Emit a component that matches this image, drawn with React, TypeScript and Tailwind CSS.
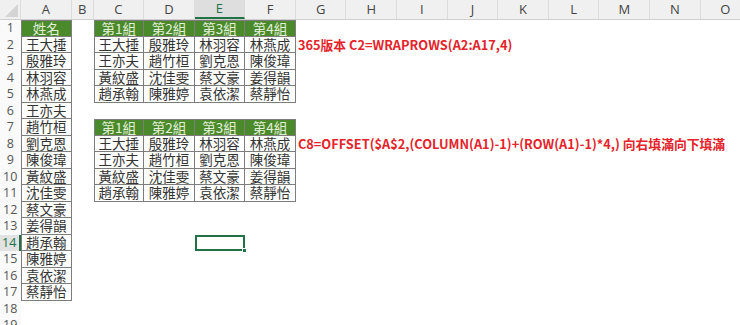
import React from "react";

type Col = { key: string; w: string };

const cols: Col[] = [
  { key: "A", w: "w-[51.5px]" },
  { key: "B", w: "w-[21.5px]" },
  { key: "C", w: "w-[50.6px]" },
  { key: "D", w: "w-[50.6px]" },
  { key: "E", w: "w-[50.6px]" },
  { key: "F", w: "w-[50.6px]" },
  { key: "G", w: "w-[50.6px]" },
  { key: "H", w: "w-[50.6px]" },
  { key: "I", w: "w-[50.6px]" },
  { key: "J", w: "w-[50.6px]" },
  { key: "K", w: "w-[50.6px]" },
  { key: "L", w: "w-[50.6px]" },
  { key: "M", w: "w-[50.6px]" },
  { key: "N", w: "w-[50.6px]" },
  { key: "O", w: "w-[50.6px]" },
];

const names = [
  "王大捶", "殷雅玲", "林羽容", "林燕成", "王亦夫", "趙竹桓", "劉克恩", "陳俊瑋",
  "黃紋盛", "沈佳雯", "蔡文豪", "姜得韻", "趙承翰", "陳雅婷", "袁依潔", "蔡靜怡",
];
const groups = ["第1組", "第2組", "第3組", "第4組"];

type Cell = { text?: string; head?: boolean; table?: boolean; left?: boolean; top?: boolean; red?: boolean; sel?: boolean };

function buildRow(r: number): Cell[] {
  const row: Cell[] = cols.map(() => ({}));
  if (r === 1) row[0] = { text: "姓名", head: true, table: true, left: true, top: true };
  else if (r <= 17) row[0] = { text: names[r - 2], table: true, left: true };
  const blocks = [1, 7];
  for (const start of blocks) {
    if (r >= start && r <= start + 4) {
      for (let c = 0; c < 4; c++) {
        const idx = 2 + c;
        if (r === start) row[idx] = { text: groups[c], head: true, table: true, left: c === 0, top: true };
        else row[idx] = { text: names[(r - start - 1) * 4 + c], table: true, left: c === 0 };
      }
    }
  }
  if (r === 2) row[6] = { text: "365版本 C2=WRAPROWS(A2:A17,4)", red: true };
  if (r === 8) row[6] = { text: "C8=OFFSET($A$2,(COLUMN(A1)-1)+(ROW(A1)-1)*4,) 向右填滿向下填滿", red: true };
  if (r === 14) row[4] = { sel: true };
  return row;
}

const cjk = "font-['Noto_Sans_CJK_TC','Noto_Sans',sans-serif]";

function CellView({ cell, w }: { cell: Cell; w: string }) {
  if (cell.red) {
    return (
      <div className={`${w} h-full shrink-0 relative overflow-visible`}>
        <span className={`${cjk} absolute left-[2px] top-[-1px] whitespace-nowrap text-[12.8px] font-bold text-[#e4232a] leading-[18px]`}>
          {cell.text}
        </span>
      </div>
    );
  }
  if (cell.sel) {
    return (
      <div className={`${w} h-full shrink-0 relative`}>
        <div className="absolute inset-0 border-2 border-[#217346]" />
        <div className="absolute right-[-2px] bottom-[-2px] w-[5px] h-[5px] bg-[#217346] border border-white" />
      </div>
    );
  }
  if (!cell.table) return <div className={`${w} h-full shrink-0`} />;
  const cls = [
    w,
    "h-full shrink-0 flex items-center justify-center border-r border-b border-[#7d7d7d]",
    cell.left ? "border-l" : "",
    cell.top ? "border-t" : "",
    cell.head ? "bg-[#4b8a2b] text-[#e3f0da]" : "bg-white text-[#333]",
    cjk,
    "text-[13.5px] leading-none whitespace-nowrap",
  ].join(" ");
  return <div className={cls}>{cell.text}</div>;
}

export default function App() {
  const rows = Array.from({ length: 19 }, (_, i) => i + 1);
  return (
    <div className="w-[740px] h-[325px] overflow-hidden bg-white select-none">
      <div className="flex h-[20px] bg-[#f0f0f0] border-b border-[#cfcfcf] font-['Open_Sans',sans-serif] text-[13px] text-[#444]">
        <div className="w-[20.5px] h-full shrink-0 relative border-r border-[#dcdcdc]">
          <svg className="absolute right-[2px] bottom-[2px]" width="13" height="13" viewBox="0 0 13 13">
            <polygon points="13,0 13,13 0,13" fill="#d4d4d4" />
          </svg>
        </div>
        {cols.map((c) => (
          <div
            key={c.key}
            className={`${c.w} h-full shrink-0 flex items-center justify-center border-r border-[#dcdcdc] ${
              c.key === "E" ? "bg-[#dedede] text-[#217346] border-b-2 border-b-[#217346]" : ""
            }`}
          >
            {c.key}
          </div>
        ))}
      </div>
      {rows.map((r) => {
        const cells = buildRow(r);
        return (
          <div key={r} className="flex h-[16.5px]">
            <div
              className={`w-[20.5px] h-full shrink-0 flex items-center justify-center font-['Open_Sans',sans-serif] text-[12.5px] leading-none ${
                r === 14 ? "bg-[#e2e2e2] text-[#217346] border-r-2 border-[#217346]" : "bg-[#fafafa] text-[#555]"
              }`}
            >
              {r}
            </div>
            {cells.map((cell, i) => (
              <CellView key={i} cell={cell} w={cols[i].w} />
            ))}
          </div>
        );
      })}
    </div>
  );
}
